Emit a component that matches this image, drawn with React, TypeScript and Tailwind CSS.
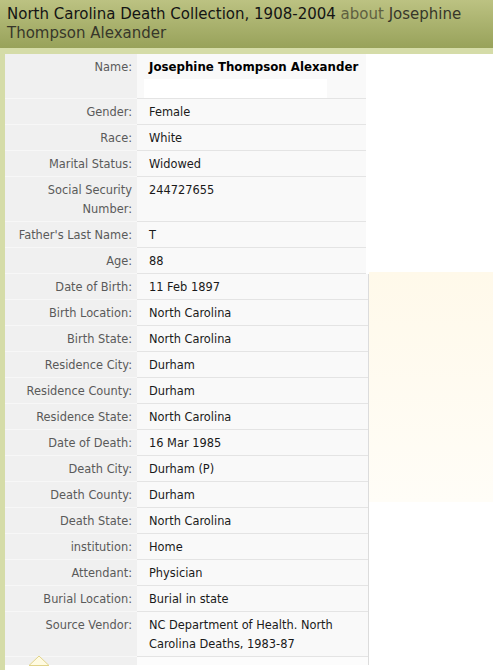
import React from "react";

type Row = { label: React.ReactNode; value: React.ReactNode };

const top: Row[] = [
  { label: "Gender:", value: "Female" },
  { label: "Race:", value: "White" },
  { label: "Marital Status:", value: "Widowed" },
  { label: <>Social Security<br />Number:</>, value: "244727655" },
  { label: "Father's Last Name:", value: "T" },
  { label: "Age:", value: "88" },
];

const bottom: Row[] = [
  { label: "Date of Birth:", value: "11 Feb 1897" },
  { label: "Birth Location:", value: "North Carolina" },
  { label: "Birth State:", value: "North Carolina" },
  { label: "Residence City:", value: "Durham" },
  { label: "Residence County:", value: "Durham" },
  { label: "Residence State:", value: "North Carolina" },
  { label: "Date of Death:", value: "16 Mar 1985" },
  { label: "Death City:", value: "Durham (P)" },
  { label: "Death County:", value: "Durham" },
  { label: "Death State:", value: "North Carolina" },
  { label: "institution:", value: "Home" },
  { label: "Attendant:", value: "Physician" },
  { label: "Burial Location:", value: "Burial in state" },
  { label: "Source Vendor:", value: <>NC Department of Health. North<br />Carolina Deaths, 1983-87</> },
];

function RowView({ r }: { r: Row }) {
  return (
    <div className="flex">
      <div className="w-[132px] shrink-0 bg-[#f0f0f0] border-b border-[#f7f7f7] text-right pr-[5px] pt-[4px] pb-[2px] text-[#5a5a5a]">{r.label}</div>
      <div className="flex-1 bg-[#f9f9f9] border-b border-[#e4e4e4] pl-[12px] pt-[4px] pb-[2px] text-[#1a1a1a]">{r.value}</div>
    </div>
  );
}

export default function App() {
  return (
    <div
      className="relative w-[493px] h-[670px] overflow-hidden bg-white"
      style={{ fontFamily: '"DejaVu Sans", Verdana, sans-serif' }}
    >
      <div className="h-[48px] px-[7px] pt-[5px] text-[15px] leading-[19px] bg-linear-to-b from-[#bcc282] to-[#98a25a] text-[#141414]">
        North Carolina Death Collection, 1908-2004{" "}
        <span className="text-[#5f6040]">about</span>{" "}
        <span className="text-[#37372a]">Josephine Thompson Alexander</span>
      </div>
      <div className="h-[6px] bg-[#d5dca8]" />
      <div className="flex text-[11.4px] leading-[19px]">
        <div className="w-[5px] shrink-0 bg-[#d5dca8]" />
        <div className="w-[364px] shrink-0">
          <div className="w-[361px]">
            <div className="flex">
              <div className="w-[132px] shrink-0 bg-[#f0f0f0] border-b border-[#f7f7f7] text-right pr-[5px] pt-[4px] pb-[2px] text-[#5a5a5a]">Name:</div>
              <div className="flex-1 bg-[#f9f9f9] border-b border-[#e4e4e4] pl-[12px] pt-[4px] pb-0">
                <div className="font-bold text-black text-[11.8px]">Josephine Thompson Alexander</div>
                <div className="ml-[-5px] mt-[2px] w-[183px] h-[19px] bg-white" />
              </div>
            </div>
            {top.map((r, i) => (
              <RowView key={i} r={r} />
            ))}
          </div>
          <div className="border-r border-[#dcdcdc]">
            {bottom.map((r, i) => (
              <RowView key={i} r={r} />
            ))}
            <div className="flex h-[8px]">
              <div className="w-[132px] shrink-0 bg-[#f0f0f0]" />
              <div className="flex-1 bg-[#fcfcfc]" />
            </div>
          </div>
          <div className="h-[20px] bg-white" />
        </div>
        <div className="flex-1">
          <div className="mt-[218px] h-[230px] bg-linear-to-b from-[#fff9ea] to-[#fffdf7]" />
        </div>
      </div>
      <svg className="absolute left-[28px] top-[655px]" width="22" height="11" viewBox="0 0 22 11">
        <polygon points="1,10.5 11,1 21,10.5" fill="#fffbe2" stroke="#e2d48a" strokeWidth="1" />
      </svg>
    </div>
  );
}
